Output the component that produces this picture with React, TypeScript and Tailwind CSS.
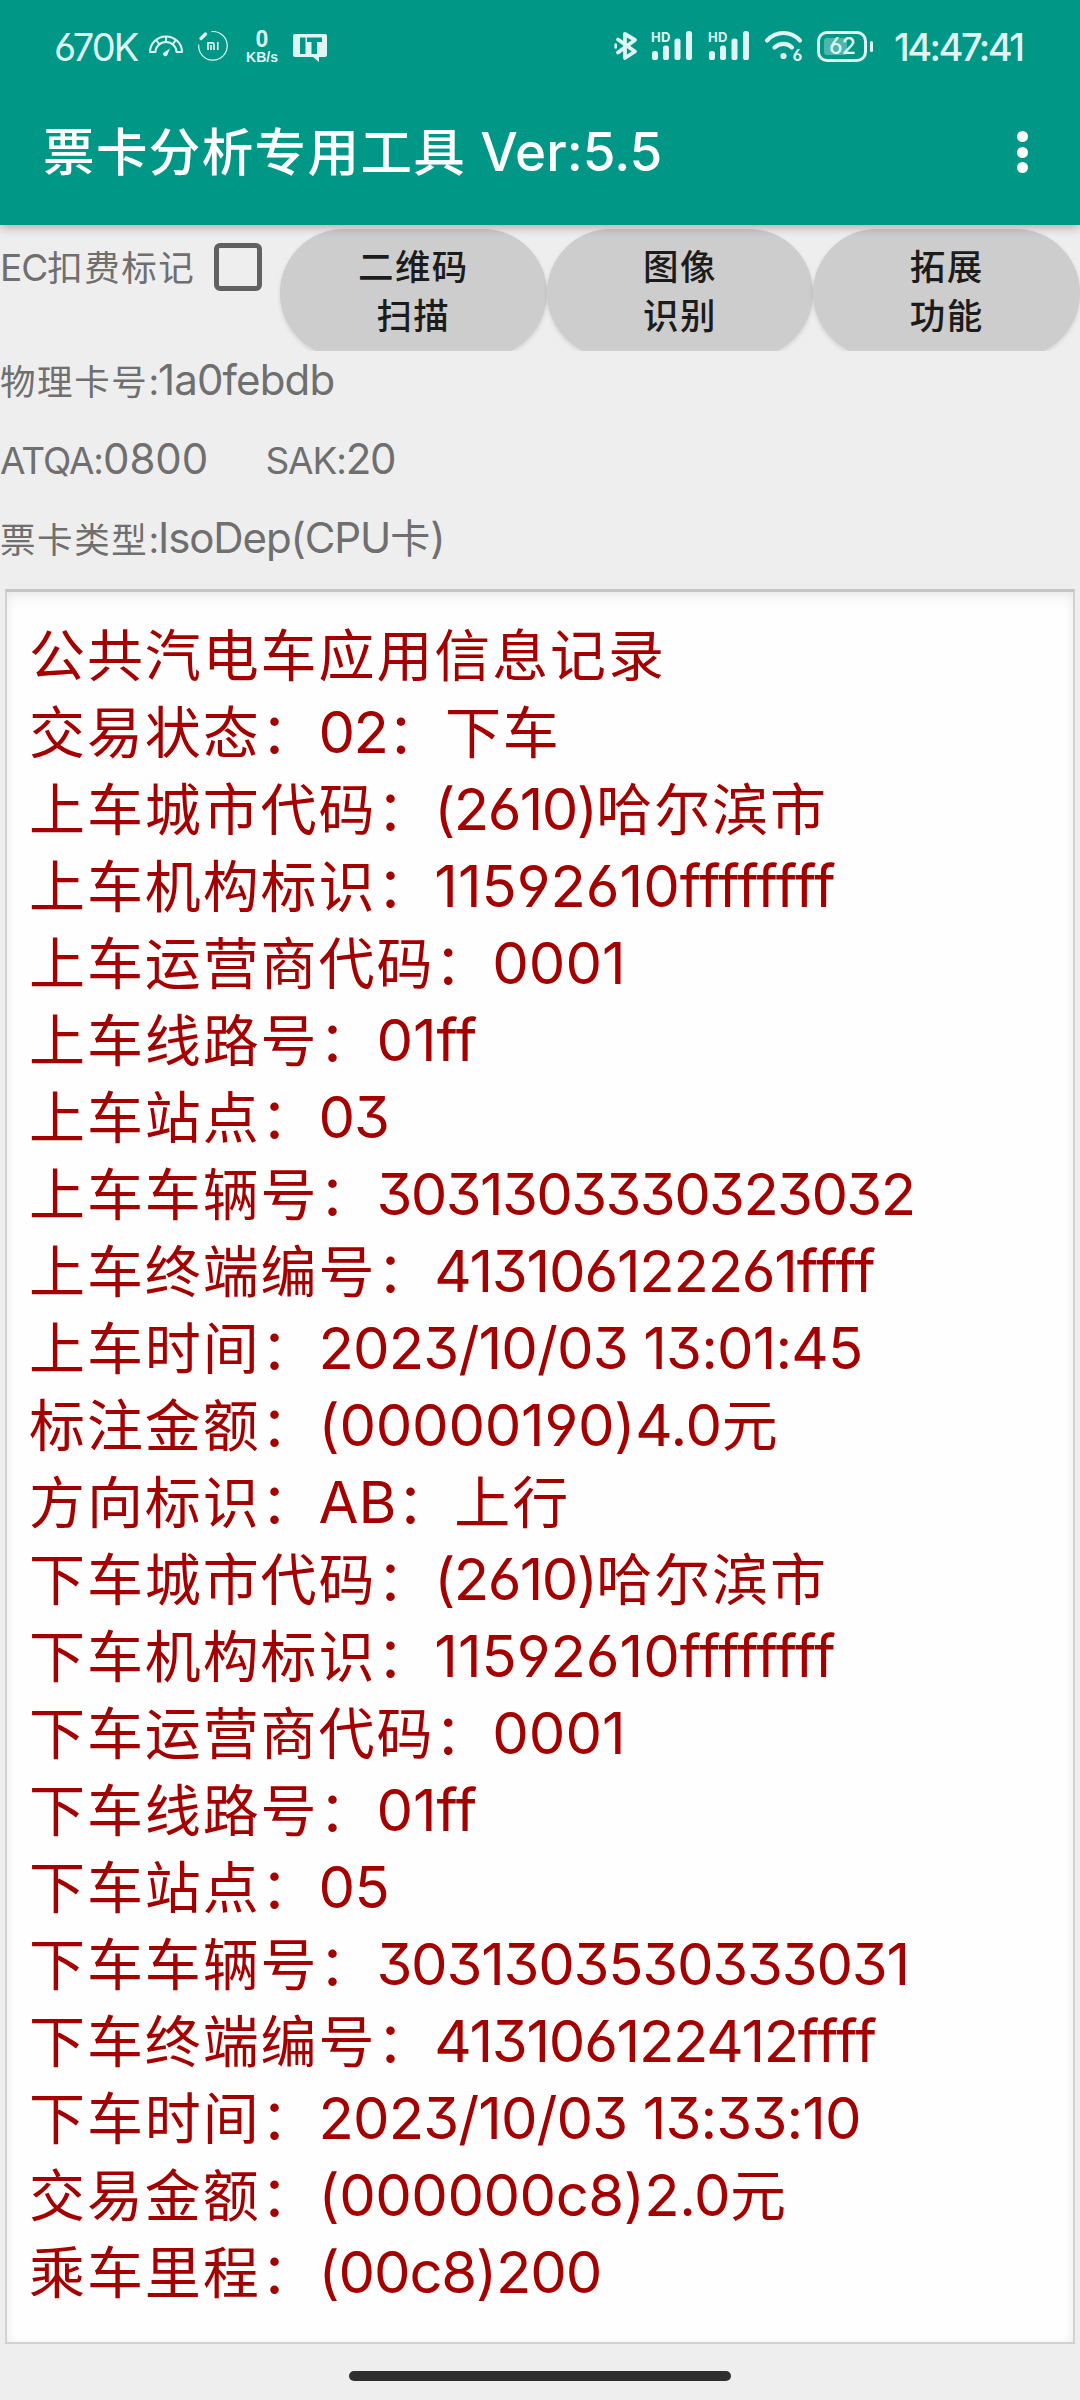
import React from "react";

/** Each record carries the tracking of its digits. */
const records: [string, string][] = [
  ["公共汽电车应用信息记录", ""],
  ["交易状态：02：下车", "tracking-[-1.700px]"],
  ["上车城市代码：(2610)哈尔滨市", "tracking-[-1.600px]"],
  ["上车机构标识：11592610ffffffff", ""],
  ["上车运营商代码：0001", ""],
  ["上车线路号：01ff", ""],
  ["上车站点：03", "tracking-[-1px]"],
  ["上车车辆号：3031303330323032", "tracking-[-1.650px]"],
  ["上车终端编号：413106122261ffff", "tracking-[-1.200px]"],
  ["上车时间：2023/10/03 13:01:45", "tracking-[-0.850px]"],
  ["标注金额：(00000190)4.0元", "tracking-[-0.250px]"],
  ["方向标识：AB：上行", ""],
  ["下车城市代码：(2610)哈尔滨市", "tracking-[-1.600px]"],
  ["下车机构标识：11592610ffffffff", ""],
  ["下车运营商代码：0001", ""],
  ["下车线路号：01ff", ""],
  ["下车站点：05", "tracking-[-0.500px]"],
  ["下车车辆号：3031303530333031", "tracking-[-1.250px]"],
  ["下车终端编号：413106122412ffff", "tracking-[-1.250px]"],
  ["下车时间：2023/10/03 13:33:10", "tracking-[-0.900px]"],
  ["交易金额：(000000c8)2.0元", "tracking-[-0.500px]"],
  ["乘车里程：(00c8)200", "tracking-[-1.150px]"],
];

const FONT = "font-['Inter','Noto_Sans_CJK_SC',sans-serif]";

/** Splits a string so Chinese, Latin and padding (ff…) runs can be set separately. */
function Mixed({ text, cjk, latin = "" }: { text: string; cjk: string; latin?: string }) {
  const parts = text.match(/[\u2e80-\uffef]+|ff+|(?:(?!ff)[^\u2e80-\uffef])+/g) ?? [];
  return (
    <>
      {parts.map((p, i) => (
        <span key={i} className={/[\u2e80-\uffef]/.test(p) ? cjk : p.startsWith("ff") ? "" : latin}>
          {p}
        </span>
      ))}
    </>
  );
}

function Gauge() {
  return (
    <svg width="36" height="24" viewBox="0 0 36 24" fill="none" stroke="currentColor" strokeWidth="2">
      <path d="M2 18A16 15.5 0 0 1 34 18H28.5A10.5 10 0 0 0 7.500 18Z" strokeLinejoin="round" />
      <path d="M18 3V8M8.500 6.500L11.500 10.500M27.500 6.500L24.500 10.500" />
      <path d="M22 14.500L19.500 20.500A2.200 2.200 0 1 1 15.500 18.800Z" fill="currentColor" stroke="none" />
    </svg>
  );
}

function MiCircle() {
  return (
    <svg width="32" height="32" viewBox="0 0 32 32" fill="none" stroke="currentColor">
      <path d="M14.500 1.600A14.300 14.300 0 1 1 1.700 14.500" strokeWidth="1.200" />
      <path d="M4 8.500L8.500 4" strokeWidth="3.200" strokeLinecap="round" />
      <path d="M11 20V12.800H15.200Q17 12.800 17 14.600V20M14 15V20M20.800 12V20" strokeWidth="1.700" />
    </svg>
  );
}

function ItBubble() {
  return (
    <svg width="34" height="29" viewBox="0 0 34 29">
      <path
        fillRule="evenodd"
        fill="currentColor"
        d="M2 0H32Q34 0 34 2V21Q34 23 32 23H26V28L20 23H2Q0 23 0 21V2Q0 0 2 0ZM7 3.500V20H12.500V3.500ZM14 3.500V8H18.500V20H24V8H29V3.500Z"
      />
    </svg>
  );
}

function Bluetooth() {
  return (
    <svg width="24" height="30" viewBox="0 0 24 30" fill="none" stroke="currentColor" strokeWidth="3.800" strokeLinejoin="round" strokeLinecap="round">
      <path d="M4 8.500L21 20.500L11 27V3L21 9L4 21.500" />
      <path d="M1.700 13.500V16.500" strokeWidth="2.600" />
    </svg>
  );
}

function Signal() {
  return (
    <div className="relative h-[30px] w-[42px]">
      <span className="absolute left-0 top-0 text-[13px] font-bold leading-[12px] tracking-[0.200px]">HD</span>
      <svg width="42" height="30" viewBox="0 0 42 30" fill="currentColor">
        <rect x="1" y="20" width="6" height="9" rx="2.600" />
        <rect x="12" y="14.500" width="6" height="14.500" rx="2.600" />
        <rect x="23.500" y="7.500" width="6" height="21.500" rx="2.600" />
        <rect x="35" y="0" width="6" height="29" rx="2.600" />
      </svg>
    </div>
  );
}

function Wifi() {
  return (
    <div className="relative h-[32px] w-[40px]">
      <svg width="40" height="32" viewBox="0 0 40 32" fill="none" stroke="currentColor" strokeWidth="4.200" strokeLinecap="round">
        <path d="M3 10.500Q10 3 19.500 3T36 10.500" />
        <path d="M10.500 17.500Q14.500 13.800 19.500 13.800T28 17.500" />
        <circle cx="19.500" cy="26" r="3.100" fill="currentColor" stroke="none" />
      </svg>
      <span className="absolute left-[28.500px] top-[18px] text-[16px] font-bold leading-[15px] [font-feature-settings:'cv03']">6</span>
    </div>
  );
}

function Battery() {
  return (
    <div className="flex items-center gap-[3px]">
      <div className="relative flex h-[31px] w-[50px] items-center justify-center rounded-[10px] border-[3px] border-current">
        <div className="absolute left-[4px] top-[4px] h-[17px] w-[23px] rounded-[3px] bg-white/30" />
        <span className="relative text-[23px] font-medium leading-[25px] tracking-[-0.800px] [font-feature-settings:'cv03']">62</span>
      </div>
      <div className="h-[11px] w-[3px] rounded-full bg-current" />
    </div>
  );
}

function StatusBar() {
  return (
    <div className="flex h-[92px] items-center text-[#dff5f2]">
      <span className="ml-[54px] mt-[2px] w-[94px] text-[38px] leading-[46px] tracking-[-1.900px] [font-feature-settings:'cv03']">670K</span>
      <Gauge />
      <div className="ml-[13px]"><MiCircle /></div>
      <div className="ml-[16px] mt-px flex w-[34px] flex-col items-center font-['Liberation_Sans'] font-bold">
        <span className="text-[23px] leading-[21px]">0</span>
        <span className="text-[14px] leading-[15px]">KB/s</span>
      </div>
      <div className="ml-[14px] mt-[4px]"><ItBubble /></div>
      <div className="ml-[287px]"><Bluetooth /></div>
      <div className="ml-[13px]"><Signal /></div>
      <div className="ml-[15px]"><Signal /></div>
      <div className="ml-[14px]"><Wifi /></div>
      <div className="ml-[13px]"><Battery /></div>
      <span className="ml-[21px] mt-[2px] whitespace-nowrap text-[38px] font-medium leading-[46px] tracking-[-2.550px]">14:47:41</span>
    </div>
  );
}

function PillButton({ lines }: { lines: [string, string] }) {
  return (
    <button className="flex h-[128px] flex-1 flex-col items-center rounded-full bg-[#cdcdcd] pt-[14px] text-[35.500px] font-medium leading-[49.500px] tracking-[1.400px] text-[#1c1c1c] shadow-[0_2px_4px_rgba(0,0,0,0.12)]">
      <span>{lines[0]}</span>
      <span>{lines[1]}</span>
    </button>
  );
}

function Info({ label, value, tracking }: { label: string; value: string; tracking: string }) {
  return (
    <div className="h-[79px] whitespace-nowrap">
      <span className="text-[37px]">
        <Mixed text={label} cjk="text-[35.500px] tracking-[1.600px]" latin="tracking-[-1.100px]" />
      </span>
      <span className="text-[42px]">
        <Mixed text={value} cjk="text-[40px]" latin={tracking} />
      </span>
    </div>
  );
}

export default function App() {
  return (
    <div className={`flex h-[2400px] w-[1080px] flex-col overflow-hidden bg-[#eeeeee] ${FONT}`}>
      <header className="relative z-10 h-[225px] shrink-0 bg-[#009787] shadow-[0_2px_10px_rgba(0,0,0,0.3)]">
        <StatusBar />
        <div className="flex h-[120px] items-center justify-between pl-[43px] pr-[52px] text-white">
          <h1 className="whitespace-nowrap text-[53px] font-medium leading-[70px]">
            <Mixed text="票卡分析专用工具 Ver:5.5" cjk="text-[51.500px] tracking-[1.400px]" />
          </h1>
          <div className="flex flex-col gap-[4.500px]">
            <i className="size-[11px] rounded-full bg-white" />
            <i className="size-[11px] rounded-full bg-white" />
            <i className="size-[11px] rounded-full bg-white" />
          </div>
        </div>
      </header>

      <div className="flex h-[126px] shrink-0 overflow-hidden pt-[3.500px]">
        <div className="flex w-[280px] shrink-0 items-start">
          <span className="w-[214px] whitespace-nowrap pt-[14px] text-[37px] leading-[50px] text-[#6f6f6f]">
            <Mixed text="EC扣费标记" cjk="text-[35.500px] tracking-[1.500px]" latin="tracking-[-1px]" />
          </span>
          <span className="mt-[14.500px] h-[48px] w-[48px] rounded-[6px] border-[5px] border-[#616161]" />
        </div>
        <PillButton lines={["二维码", "扫描"]} />
        <PillButton lines={["图像", "识别"]} />
        <PillButton lines={["拓展", "功能"]} />
      </div>

      <section className="shrink-0 text-[42px] leading-[79px] text-[#6f6f6f]">
        <div className="-mt-[11px]">
          <Info label="物理卡号:" value="1a0febdb" tracking="tracking-[-0.850px]" />
        </div>
        <div className="flex gap-[57px]">
          <Info label="ATQA:" value="0800" tracking="" />
          <Info label="SAK:" value="20" tracking="tracking-[-1.500px]" />
        </div>
        <Info label="票卡类型:" value="IsoDep(CPU卡)" tracking="tracking-[-1.100px]" />
      </section>

      <main className="mx-[5px] mt-[12px] h-[1755px] shrink-0 border-2 border-t-[3px] border-[#d2d2d2] border-t-[#c4c4c4] bg-[#fefefe] pl-[22px] pt-[25px] text-[58px] leading-[77px] text-[#a40000] shadow-[inset_0_8px_16px_-4px_rgba(0,0,0,0.07),inset_0_0_10px_rgba(0,0,0,0.04)] [font-feature-settings:'cv03','cv04','cv09']">
        {records.map(([text, tracking]) => (
          <div key={text} className="h-[77px] whitespace-nowrap">
            <Mixed text={text} cjk="text-[56px] tracking-[1.900px]" latin={tracking} />
          </div>
        ))}
      </main>

      <footer className="flex flex-1 justify-center pt-[27px]">
        <div className="h-[10px] w-[382px] rounded-full bg-[#2f2f2f]" />
      </footer>
    </div>
  );
}
